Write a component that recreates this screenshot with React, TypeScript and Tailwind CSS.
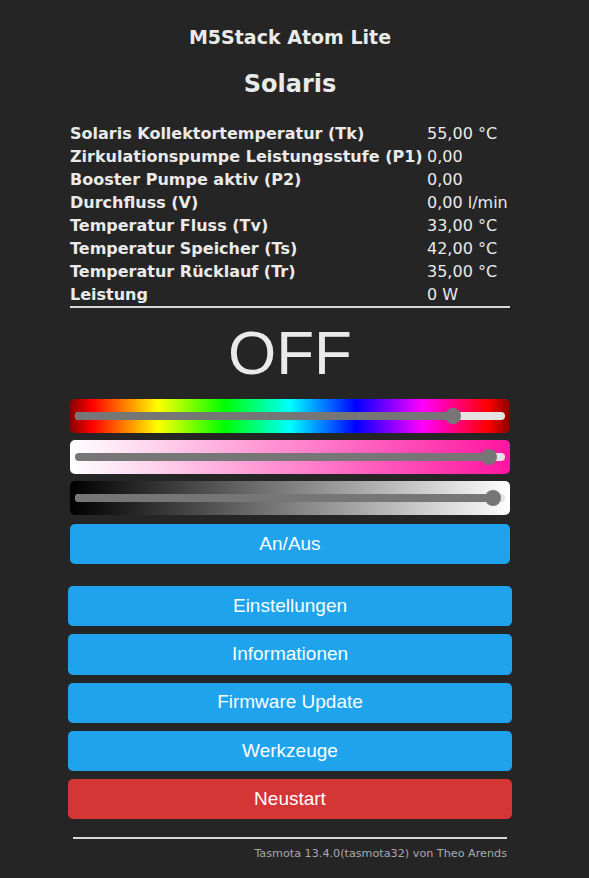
import React from 'react';

const rows: [string, string][] = [
  ['Solaris Kollektortemperatur (Tk)', '55,00 °C'],
  ['Zirkulationspumpe Leistungsstufe (P1)', '0,00'],
  ['Booster Pumpe aktiv (P2)', '0,00'],
  ['Durchfluss (V)', '0,00 l/min'],
  ['Temperatur Fluss (Tv)', '33,00 °C'],
  ['Temperatur Speicher (Ts)', '42,00 °C'],
  ['Temperatur Rücklauf (Tr)', '35,00 °C'],
  ['Leistung', '0 W'],
];

const menu = ['Einstellungen', 'Informationen', 'Firmware Update', 'Werkzeuge'];

function Slider({ bg, pos }: { bg: string; pos: number }) {
  return (
    <div className={`h-[34px] w-[440px] rounded-[5px] px-[5px] flex items-center ${bg}`}>
      <div className="relative h-[8px] w-full rounded-full bg-[#e4e4e4]">
        <div className="h-full rounded-full bg-[#767676]" style={{ width: `${pos}px` }} />
        <div
          className="absolute top-1/2 h-[16px] w-[16px] -translate-x-1/2 -translate-y-1/2 rounded-full bg-[#767676]"
          style={{ left: `${pos}px` }}
        />
      </div>
    </div>
  );
}

export default function App() {
  return (
    <div className="min-h-[878px] w-full bg-[#252525] text-[#eaeaea] font-['DejaVu_Sans',Verdana,sans-serif]">
      <div className="w-[580px] flex flex-col items-center pt-[26px]">
        <h3 className="text-[19px] leading-[22px] font-bold">M5Stack Atom Lite</h3>
        <h2 className="mt-[22px] text-[24px] leading-[28px] font-bold">Solaris</h2>

        {/* Sensor table */}
        <div className="mt-[24px] w-[440px]">
          {rows.map(([label, value]) => (
            <div key={label} className="grid grid-cols-[357px_1fr] text-[16px] leading-[23px]">
              <span className="font-bold whitespace-nowrap">{label}</span>
              <span className="whitespace-nowrap">{value}</span>
            </div>
          ))}
          <div className="h-[2px] bg-[#d8d8d8]" />
        </div>

        <div className="mt-[14px] text-[62px] leading-[62px] font-['Liberation_Sans',Arial,sans-serif]">OFF</div>

        {/* Colour sliders */}
        <div className="mt-[15px] flex flex-col gap-[7px]">
          <Slider
            bg="bg-[linear-gradient(to_right,#800,#f00_5%,#ff0_20%,#0f0_35%,#0ff_50%,#00f_65%,#f0f_80%,#f00_95%,#800)]"
            pos={378}
          />
          <Slider bg="bg-[linear-gradient(to_right,#fff,#ff14a0)]" pos={414} />
          <Slider bg="bg-[linear-gradient(to_right,#000,#fff)]" pos={418} />
        </div>

        <div className="mt-[9px] flex flex-col font-['Liberation_Sans',Arial,sans-serif] text-[19px] text-[#faffff]">
          <button className="h-[40px] w-[440px] self-center rounded-[5px] bg-[#1fa3ec]">An/Aus</button>
          <div className="mt-[22px] flex flex-col gap-[8px]">
            {menu.map((m) => (
              <button key={m} className="h-[40.3px] w-[444px] rounded-[5px] bg-[#1fa3ec]">
                {m}
              </button>
            ))}
            <button className="h-[40.3px] w-[444px] rounded-[5px] bg-[#d43535]">Neustart</button>
          </div>
        </div>

        {/* Footer */}
        <div className="mt-[18px] w-[434px]">
          <div className="h-[2px] bg-[#d8d8d8]" />
          <div className="mt-[8px] text-right text-[11.2px] leading-[14px] text-[#aaaaaa]">
            Tasmota 13.4.0(tasmota32) von Theo Arends
          </div>
        </div>
      </div>
    </div>
  );
}
